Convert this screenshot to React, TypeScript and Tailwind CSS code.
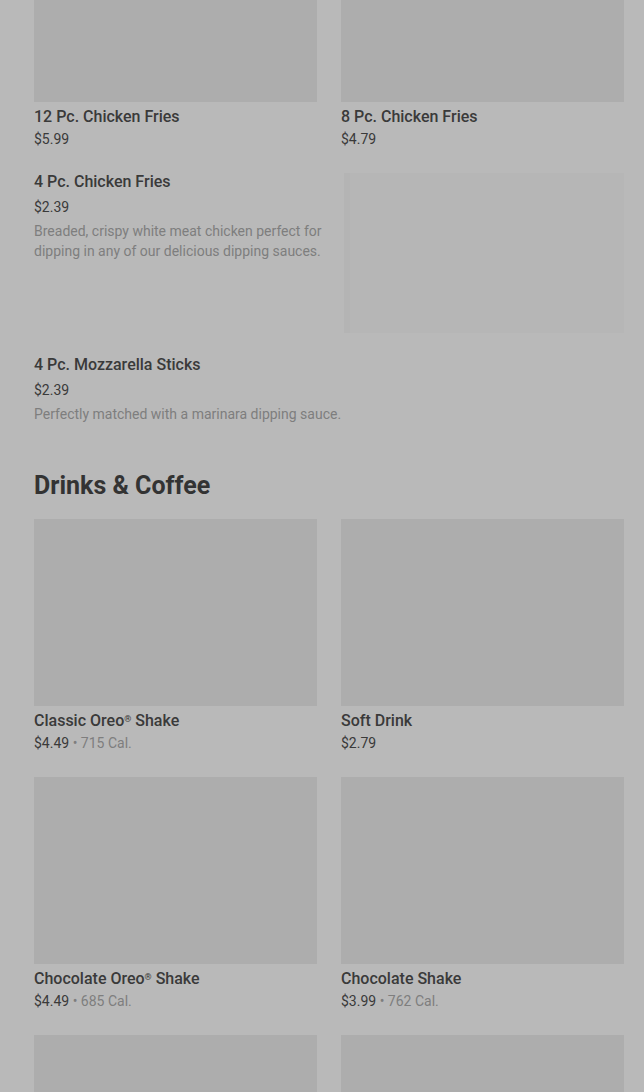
import React from "react";

const font = { fontFamily: "Roboto, 'Noto Sans', sans-serif" };

function GridCard({ name, price, cal }: { name?: React.ReactNode; price?: string; cal?: string }) {
  return (
    <div className="flex flex-col">
      <div className="h-[187px] w-full bg-[#adadad]" />
      {name && <div className="mt-[3px] text-[16px] leading-[24px] font-medium text-[#3a3a3a]">{name}</div>}
      {price && (
        <div className="text-[14px] leading-[20px] text-[#3a3a3a]">
          {price}
          {cal && <span className="text-[#7e7e7e]"> • {cal}</span>}
        </div>
      )}
    </div>
  );
}

export default function App() {
  return (
    <div className="h-[1092px] w-full bg-[#b9b9b9] overflow-hidden" style={font}>
      <div className="pl-[34px] pr-[20px]">
        <div className="-mt-[86px] grid grid-cols-2 gap-x-[24px]">
          <div className="flex flex-col">
            <div className="h-[188px] bg-[#adadad]" />
            <div className="mt-[3px] text-[16px] leading-[24px] font-medium text-[#3a3a3a]">12 Pc. Chicken Fries</div>
            <div className="text-[14px] leading-[20px] text-[#3a3a3a]">$5.99</div>
          </div>
          <div className="flex flex-col">
            <div className="h-[188px] bg-[#adadad]" />
            <div className="mt-[3px] text-[16px] leading-[24px] font-medium text-[#3a3a3a]">8 Pc. Chicken Fries</div>
            <div className="text-[14px] leading-[20px] text-[#3a3a3a]">$4.79</div>
          </div>
        </div>

        <div className="mt-[21px] flex gap-[10px]">
          <div className="flex-1 flex flex-col">
            <div className="text-[16px] leading-[24px] font-medium text-[#3a3a3a]">4 Pc. Chicken Fries</div>
            <div className="mt-[3px] text-[14px] leading-[20px] text-[#3a3a3a]">$2.39</div>
            <div className="mt-[4px] text-[14px] leading-[20px] text-[#7e7e7e]">
              Breaded, crispy white meat chicken perfect for dipping in any of our delicious dipping sauces.
            </div>
          </div>
          <div className="mt-[3px] h-[160px] w-[280px] shrink-0 bg-[#b6b6b6] border-l-[6px] border-[#b4b4b4]" />
        </div>

        <div className="mt-[20px] flex flex-col">
          <div className="text-[16px] leading-[24px] font-medium text-[#3a3a3a]">4 Pc. Mozzarella Sticks</div>
          <div className="mt-[3px] text-[14px] leading-[20px] text-[#3a3a3a]">$2.39</div>
          <div className="mt-[4px] text-[14px] leading-[20px] text-[#7e7e7e]">Perfectly matched with a marinara dipping sauce.</div>
        </div>

        <h2 className="mt-[46px] text-[25px] leading-[32px] font-bold text-[#333333]">Drinks &amp; Coffee</h2>

        <div className="mt-[17px] grid grid-cols-2 gap-x-[24px] gap-y-[24px]">
          <GridCard name={<>Classic Oreo<sup className="text-[9px]">®</sup> Shake</>} price="$4.49" cal="715 Cal." />
          <GridCard name="Soft Drink" price="$2.79" />
          <GridCard name={<>Chocolate Oreo<sup className="text-[9px]">®</sup> Shake</>} price="$4.49" cal="685 Cal." />
          <GridCard name="Chocolate Shake" price="$3.99" cal="762 Cal." />
          <GridCard />
          <GridCard />
        </div>
      </div>
    </div>
  );
}
